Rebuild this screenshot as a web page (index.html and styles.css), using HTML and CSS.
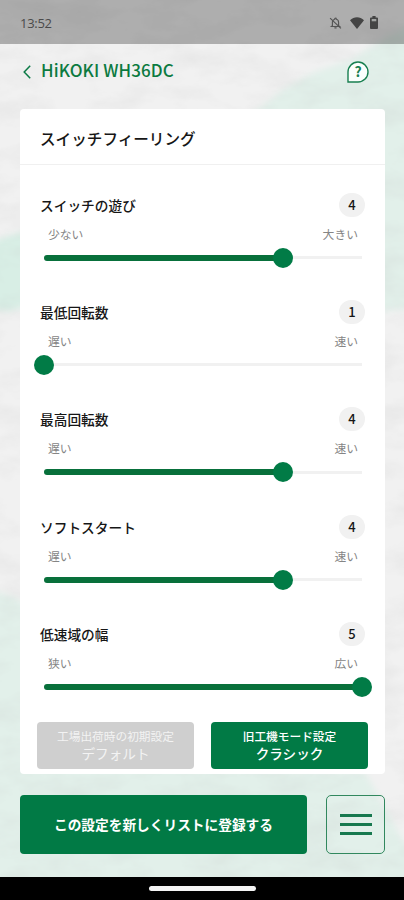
FILE: index.html
```html
<!DOCTYPE html>
<html lang="ja">
<head>
<meta charset="utf-8">
<title>HiKOKI WH36DC</title>
<link rel="stylesheet" href="styles.css">
</head>
<body>
<div class="screen">
  <svg class="backdrop" viewBox="0 0 404 900" aria-hidden="true">
    <defs>
      <filter id="soft" x="-20%" y="-20%" width="140%" height="140%"><feGaussianBlur stdDeviation="3"/></filter>
      <filter id="plaster" x="0" y="0" width="100%" height="100%">
        <feTurbulence type="fractalNoise" baseFrequency="0.02 0.04" numOctaves="5" seed="8"/>
        <feColorMatrix values="0 0 0 0 0.5  0 0 0 0 0.5  0 0 0 0 0.5  0.35 0 0 0 -0.14"/>
      </filter>
    </defs>
    <rect width="404" height="900" fill="#f1f1f1"/>
    <g fill="#e2f0ea" filter="url(#soft)">
      <path d="M245 120 L285 88 L315 72 L350 60 L385 38 L420 20 V308 L375 312 V120Z"/>
      <path d="M-10 242 L8 236 L30 230 V306 L10 311 L-10 310Z" fill="#d8eee5"/>
      <path d="M-10 590 L12 596 L30 606 V765 L365 772 L404 842 L420 850 V900 H-10Z"/>
    </g>
    <rect width="404" height="900" filter="url(#plaster)"/>
  </svg>

  <header class="status">
    <span class="clock">13:52</span>
    <span class="status-icons">
      <svg class="bell" viewBox="0 0 24 24"><path d="M12 3a1.500 1.500 0 0 0-1.500 1.500v.7A6 6 0 0 0 6.300 10v7L4.500 18.500h15L17.700 17v-6c0-3-1.700-5.200-4.200-5.800v-.7A1.500 1.500 0 0 0 12 3z" fill="none" stroke="#555" stroke-width="2.100"/><path d="M10 21h4M2 3l20 19" stroke="#555" stroke-width="2.200"/></svg>
      <svg class="wifi" viewBox="0 0 14 12"><path d="M0 3.200C4-.8 10-.8 14 3.200L7 12z" fill="#444"/></svg>
      <svg class="battery" viewBox="0 0 8 13"><path d="M2.400 0h3.200v1.500H7q1 0 1 1V12q0 1-1 1H1q-1 0-1-1V2.500q0-1 1-1h1.400z" fill="#444"/><path d="M1.700 3h4.600v2.300H1.700z" fill="#a1a3a2"/></svg>
    </span>
  </header>

  <nav class="topbar">
    <svg class="back" viewBox="0 0 8 14"><path d="M7.200.8L1.200 7l6 6.200" fill="none" stroke="#0b7a46" stroke-width="1.500"/></svg>
    <h1 class="device">HiKOKI WH36DC</h1>
    <div class="help">
      <svg class="help-shape" viewBox="0 0 24 24"><path d="M2 22V12A10 10 0 1 1 12 22z" fill="#fbfefc" stroke="#187f50" stroke-width="1.400"/></svg>
      <span class="help-mark">?</span>
    </div>
  </nav>

  <main class="card">
    <h2 class="card-title">スイッチフィーリング</h2>
    <div class="settings">
      <section class="setting">
        <div class="setting-head"><span>スイッチの遊び</span><span class="value">4</span></div>
        <div class="range-labels"><span>少ない</span><span>大きい</span></div>
        <div class="slider"><div class="fill" style="width:75%"></div><div class="thumb"></div></div>
      </section>
      <section class="setting">
        <div class="setting-head"><span>最低回転数</span><span class="value">1</span></div>
        <div class="range-labels"><span>遅い</span><span>速い</span></div>
        <div class="slider"><div class="fill" style="width:0%"></div><div class="thumb"></div></div>
      </section>
      <section class="setting">
        <div class="setting-head"><span>最高回転数</span><span class="value">4</span></div>
        <div class="range-labels"><span>遅い</span><span>速い</span></div>
        <div class="slider"><div class="fill" style="width:75%"></div><div class="thumb"></div></div>
      </section>
      <section class="setting">
        <div class="setting-head"><span>ソフトスタート</span><span class="value">4</span></div>
        <div class="range-labels"><span>遅い</span><span>速い</span></div>
        <div class="slider"><div class="fill" style="width:75%"></div><div class="thumb"></div></div>
      </section>
      <section class="setting">
        <div class="setting-head"><span>低速域の幅</span><span class="value">5</span></div>
        <div class="range-labels"><span>狭い</span><span>広い</span></div>
        <div class="slider"><div class="fill" style="width:100%"></div><div class="thumb"></div></div>
      </section>
    </div>
    <div class="presets">
      <button class="preset preset-off"><span class="preset-note">工場出荷時の初期設定</span><span class="preset-name">デフォルト</span></button>
      <button class="preset"><span class="preset-note">旧工機モード設定</span><span class="preset-name">クラシック</span></button>
    </div>
  </main>

  <div class="actions">
    <button class="register">この設定を新しくリストに登録する</button>
    <button class="menu" aria-label="メニュー"><i></i><i></i><i></i></button>
  </div>

  <footer class="gesture"><div class="pill"></div></footer>
</div>
</body>
</html>
```
FILE: styles.css
```css
* { box-sizing: border-box; }

body {
  margin: 0;
  font-family: "Noto Sans CJK JP", sans-serif;
  color: #161616;
}

.screen {
  position: relative;
  z-index: 0;
  width: 404px;
  height: 900px;
  overflow: hidden;
  display: flex;
  flex-direction: column;
}

.backdrop {
  position: absolute;
  inset: 0;
  z-index: -1;
  width: 404px;
  height: 900px;
}

.status {
  height: 44px;
  padding: 1px 26px 0 20px;
  display: flex;
  align-items: center;
  justify-content: space-between;
  background: rgba(0, 0, 0, 0.28);
}

.clock {
  font: 500 13px/20px "Open Sans", sans-serif;
  letter-spacing: -0.3px;
  color: #4a4a4a;
}

.status-icons { display: flex; align-items: center; }
.bell { width: 13px; height: 14px; margin-right: 8px; }
.wifi { width: 14px; height: 12px; margin-right: 6px; }
.battery { width: 8px; height: 13px; }

.topbar {
  height: 65px;
  padding: 0 34px 9px 23px;
  display: flex;
  align-items: center;
}

.back { width: 8px; height: 14px; }

.device {
  flex: 1;
  margin: -5px 0 0 10px;
  font-size: 17px;
  line-height: 24px;
  font-weight: 500;
  letter-spacing: 0.1px;
  color: #0b7a40;
}

.help {
  position: relative;
  width: 24px;
  height: 24px;
}

.help-shape { display: block; width: 24px; height: 24px; }

.help-mark {
  position: absolute;
  inset: 0;
  text-align: center;
  font-size: 14px;
  line-height: 23px;
  font-weight: 700;
  color: #187f50;
}

.card {
  width: 365px;
  height: 665px;
  margin-left: 20px;
  border-radius: 4px;
  background: #fff;
}

.card-title {
  height: 56px;
  margin: 0;
  padding-left: 20px;
  border-bottom: 1px solid #f0f0f0;
  font-size: 15.6px;
  line-height: 58px;
  font-weight: 500;
}

.settings { padding: 27.5px 20px 0; }
.setting { height: 107.35px; }
.setting:last-child { height: 100.1px; }

.setting-head {
  height: 24px;
  display: flex;
  align-items: center;
  justify-content: space-between;
  font-size: 13.7px;
  line-height: 24px;
  font-weight: 500;
}

.value {
  width: 26px;
  height: 24px;
  border-radius: 12px;
  background: #f1f1f1;
  text-align: center;
  font-size: 13px;
}

.range-labels {
  margin-top: 8px;
  padding: 0 7px 0 8px;
  height: 18px;
  display: flex;
  justify-content: space-between;
  font-size: 11.8px;
  line-height: 18px;
  color: #858585;
}

.slider {
  height: 20px;
  margin: 5px 3px 0 4px;
  display: flex;
  align-items: center;
  background: linear-gradient(#f1f1f1, #f1f1f1) center / 100% 3px no-repeat;
}

.fill {
  height: 6px;
  border-radius: 3px;
  background: #08703b;
}

.thumb {
  flex: none;
  width: 20px;
  height: 20px;
  margin: 0 -10px;
  border-radius: 50%;
  background: #017b46;
}

.presets {
  padding: 0 17px;
  display: flex;
  justify-content: space-between;
}

button {
  margin: 0;
  border: 0;
  padding: 0;
  font-family: inherit;
  color: #fff;
}

.preset {
  width: 157px;
  height: 47px;
  border-radius: 4px;
  background: #017a45;
  display: flex;
  flex-direction: column;
  align-items: center;
  justify-content: center;
  line-height: 17px;
  font-weight: 500;
}

.preset-off { background: #cfcfcf; color: #f3f3f3; font-weight: 400; }
.preset-note { font-size: 11.7px; line-height: 16px; }
.preset-name { font-size: 13.6px; line-height: 18px; }

.actions {
  padding: 20.5px 19px 0 20px;
  display: flex;
  justify-content: space-between;
}

.register {
  width: 287px;
  height: 59px;
  border-radius: 4px;
  background: #017a45;
  font-size: 13.7px;
  font-weight: 700;
}

.menu {
  width: 59px;
  height: 59px;
  border: 1.500px solid #31885e;
  border-radius: 5px;
  background: transparent;
  display: flex;
  flex-direction: column;
  align-items: center;
  justify-content: center;
  gap: 6px;
}

.menu i { width: 32px; height: 3px; background: #17794f; }

.gesture {
  height: 23px;
  margin-top: auto;
  display: flex;
  align-items: center;
  justify-content: center;
  background: #000;
}

.pill {
  width: 107px;
  height: 5px;
  border-radius: 3px;
  background: #f4f4f4;
}
```
